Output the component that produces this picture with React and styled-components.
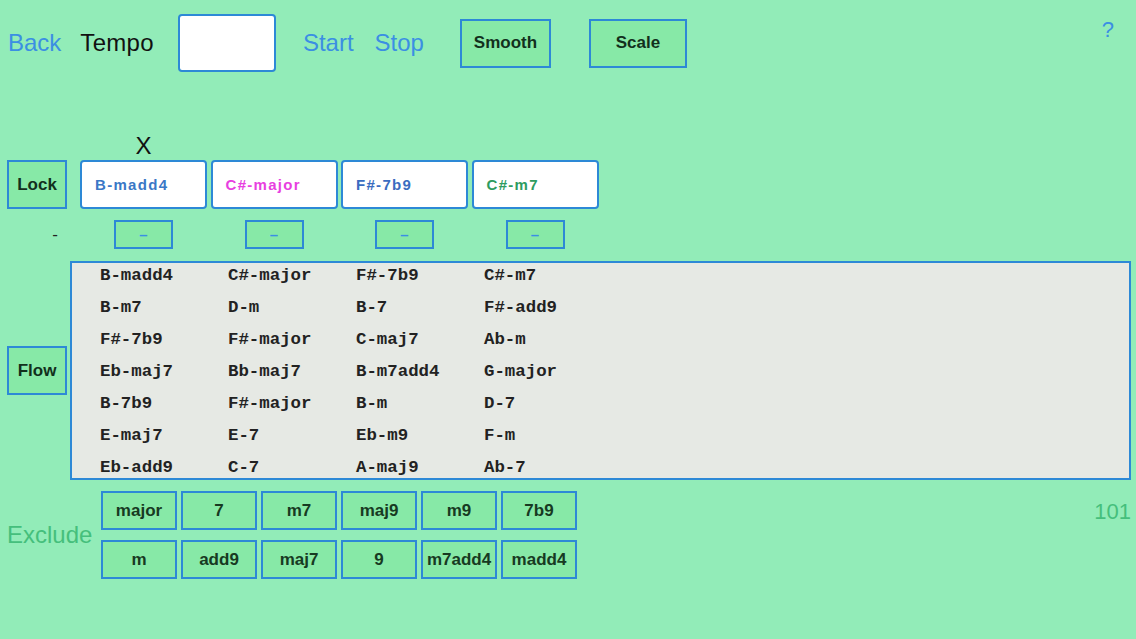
import React from 'react';
import styled, { createGlobalStyle } from 'styled-components';

const BG = '#92ecb8';
const FILL = '#87e9a7';
const BORDER = '#2d89d6';
const LINK = '#3b8fe3';

const GlobalStyle = createGlobalStyle`
    body {
        margin: 0;
        background: ${BG};
        font-family: "Liberation Sans", Arial, sans-serif;
    }
`;

const Screen = styled.div`
    width: 1136px;
    height: 639px;
    overflow: hidden;
    background: ${BG};
    display: flex;
    flex-direction: column;
`;

const TopBar = styled.div`
    height: 86px;
    display: flex;
    align-items: center;
    padding: 0 22px 0 8px;
`;

const Link = styled.span`
    font-size: 24px;
    color: ${LINK};
    margin-left: ${p => p.$ml || 0}px;
    cursor: pointer;
`;

const Caption = styled.span`
    font-size: 24px;
    color: #111;
    margin-left: ${p => p.$ml || 0}px;
    letter-spacing: 0.3px;
`;

const TempoInput = styled.input`
    box-sizing: border-box;
    width: 98px;
    height: 58px;
    margin-left: 24px;
    border: 2px solid ${BORDER};
    border-radius: 4px;
    background: #fff;
    outline: none;
`;

const ToggleButton = styled.button`
    box-sizing: border-box;
    width: ${p => p.$w}px;
    height: 49px;
    margin-left: ${p => p.$ml}px;
    background: ${FILL};
    border: 2px solid ${BORDER};
    font-family: "Liberation Sans", Arial, sans-serif;
    font-weight: bold;
    font-size: 17px;
    color: #12301c;
    padding: 0;
`;

const Help = styled.span`
    margin-left: auto;
    align-self: flex-start;
    margin-top: 17px;
    font-size: 22px;
    color: ${LINK};
`;

const Row = styled.div`
    display: flex;
    align-items: center;
    padding: 0 5px 0 7px;
    margin-top: ${p => p.$mt || 0}px;
    height: ${p => p.$h ? `${p.$h}px` : 'auto'};
`;

const SideCell = styled.div`
    width: 60px;
    flex: none;
    display: flex;
    justify-content: ${p => p.$end ? 'flex-end' : 'center'};
    padding-right: ${p => p.$end ? 9 : 0}px;
    box-sizing: border-box;
    color: #222;
    font-size: 17px;
`;

const SideButton = styled(ToggleButton)`
    width: 60px;
    margin-left: 0;
`;

const ChordGrid = styled.div`
    margin-left: 13px;
    display: grid;
    grid-template-columns: repeat(4, 127px);
    column-gap: 3.5px;
    height: 100%;
    align-items: center;
`;

const XMark = styled.div`
    justify-self: center;
    font-size: 24px;
    line-height: 29px;
    color: #111;
`;

const ChordBox = styled.div`
    box-sizing: border-box;
    height: 49px;
    background: #fff;
    border: 2px solid ${BORDER};
    border-radius: 4px;
    display: flex;
    align-items: center;
    padding-left: 13px;
    font-weight: bold;
    font-size: 15px;
    letter-spacing: 1.3px;
    color: ${p => p.$color};
`;

const MinusButton = styled.button`
    justify-self: center;
    box-sizing: border-box;
    width: 59px;
    height: 29px;
    background: ${FILL};
    border: 2px solid ${BORDER};
    color: ${LINK};
    font-family: "Liberation Sans", Arial, sans-serif;
    font-weight: bold;
    font-size: 15px;
    padding: 0;
`;

const ListBox = styled.div`
    box-sizing: border-box;
    margin-left: 3px;
    flex: 1;
    height: 219px;
    background: #e6e9e4;
    border: 2px solid ${BORDER};
    overflow: hidden;
    padding-left: 28px;
`;

const ListGrid = styled.div`
    display: grid;
    grid-template-columns: repeat(4, 128px);
    row-gap: 6px;
`;

const ListItem = styled.div`
    font-family: "Liberation Mono", "Courier New", monospace;
    font-weight: bold;
    font-size: 17.4px;
    line-height: 26px;
    color: #222;
    white-space: nowrap;
`;

const ExcludeLabel = styled.div`
    width: 94px;
    flex: none;
    font-size: 24px;
    color: #45bf7c;
`;

const ExcludeGrid = styled.div`
    display: grid;
    grid-template-columns: repeat(6, 76px);
    grid-auto-rows: 39px;
    column-gap: 4px;
    row-gap: 10px;
`;

const ExcludeButton = styled.button`
    box-sizing: border-box;
    background: ${FILL};
    border: 2px solid ${BORDER};
    font-family: "Liberation Sans", Arial, sans-serif;
    font-weight: bold;
    font-size: 17px;
    color: #173a22;
    padding: 0;
    white-space: nowrap;
    overflow: visible;
`;

const Count = styled.div`
    margin-left: auto;
    align-self: flex-start;
    line-height: 41px;
    font-size: 22px;
    color: #45bf7c;
`;

const chords = [
    { name: 'B-madd4', color: '#3a78c6' },
    { name: 'C#-major', color: '#e83fe0' },
    { name: 'F#-7b9', color: '#3a6cc0' },
    { name: 'C#-m7', color: '#2e9c60' },
];

const flow = [
    ['B-madd4', 'C#-major', 'F#-7b9', 'C#-m7'],
    ['B-m7', 'D-m', 'B-7', 'F#-add9'],
    ['F#-7b9', 'F#-major', 'C-maj7', 'Ab-m'],
    ['Eb-maj7', 'Bb-maj7', 'B-m7add4', 'G-major'],
    ['B-7b9', 'F#-major', 'B-m', 'D-7'],
    ['E-maj7', 'E-7', 'Eb-m9', 'F-m'],
    ['Eb-add9', 'C-7', 'A-maj9', 'Ab-7'],
];

const excludes = ['major', '7', 'm7', 'maj9', 'm9', '7b9', 'm', 'add9', 'maj7', '9', 'm7add4', 'madd4'];

export default function App() {
    return (
        <Screen>
            <GlobalStyle />
            <TopBar>
                <Link>Back</Link>
                <Caption $ml={19}>Tempo</Caption>
                <TempoInput readOnly />
                <Link $ml={27}>Start</Link>
                <Link $ml={21}>Stop</Link>
                <ToggleButton $w={91} $ml={36}>Smooth</ToggleButton>
                <ToggleButton $w={98} $ml={38}>Scale</ToggleButton>
                <Help>?</Help>
            </TopBar>

            <Row $mt={45} $h={29}>
                <SideCell />
                <ChordGrid>
                    <XMark>X</XMark>
                </ChordGrid>
            </Row>

            <Row $h={49}>
                <SideButton>Lock</SideButton>
                <ChordGrid>
                    {chords.map(c => (
                        <ChordBox key={c.name} $color={c.color}>{c.name}</ChordBox>
                    ))}
                </ChordGrid>
            </Row>

            <Row $mt={11} $h={29}>
                <SideCell $end>-</SideCell>
                <ChordGrid>
                    {chords.map(c => (
                        <MinusButton key={c.name}>–</MinusButton>
                    ))}
                </ChordGrid>
            </Row>

            <Row $mt={12}>
                <SideButton>Flow</SideButton>
                <ListBox>
                    <ListGrid>
                        {flow.flat().map((name, i) => (
                            <ListItem key={i}>{name}</ListItem>
                        ))}
                    </ListGrid>
                </ListBox>
            </Row>

            <Row $mt={11}>
                <ExcludeLabel>Exclude</ExcludeLabel>
                <ExcludeGrid>
                    {excludes.map(e => (
                        <ExcludeButton key={e}>{e}</ExcludeButton>
                    ))}
                </ExcludeGrid>
                <Count>101</Count>
            </Row>
        </Screen>
    );
}
